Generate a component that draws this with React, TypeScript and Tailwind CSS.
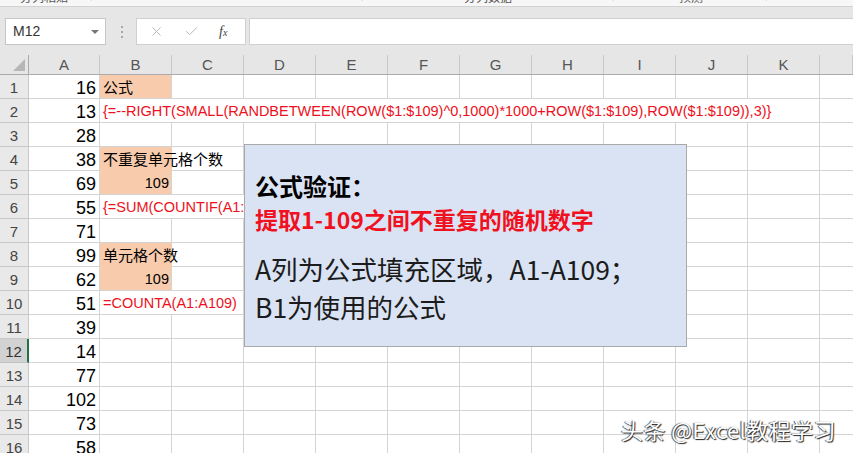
import React from "react";
import { X, Check } from "lucide-react";

/* ── sheet data ───────────────────────────────────────────── */

const COLS = ["A", "B", "C", "D", "E", "F", "G", "H", "I", "J", "K", ""];
const A_VALUES = [16, 13, 28, 38, 69, 55, 71, 99, 62, 51, 39, 14, 77, 102, 73, 58];

const SPAN_W: Record<number, string> = {
  1: "w-[72px]",
  2: "w-[144px]",
  3: "w-[216px]",
  10: "w-[720px]",
};

const LINE = "border-[#d4d4d4]";
const RED = "text-[#ee1020]";

type CellSpec = {
  span: number;
  text?: string;
  orange?: boolean;
  noRight?: boolean;
  orangeBottom?: boolean;
  align?: "left" | "right";
  red?: boolean;
  cjk?: boolean;
};

function rowCells(r: number): CellSpec[] {
  const rest = (from: number): CellSpec[] =>
    Array.from({ length: 10 - from }, () => ({ span: 1 }));
  switch (r) {
    case 1:
      return [{ span: 1, text: "公式", orange: true, cjk: true }, ...rest(1)];
    case 2:
      return [
        {
          span: 10,
          text: "{=--RIGHT(SMALL(RANDBETWEEN(ROW($1:$109)^0,1000)*1000+ROW($1:$109),ROW($1:$109)),3)}",
          red: true,
        },
      ];
    case 4:
      return [
        { span: 1, text: "不重复单元格个数", orange: true, noRight: true, orangeBottom: true, cjk: true },
        ...rest(1),
      ];
    case 5:
      return [{ span: 1, text: "109", orange: true, align: "right" }, ...rest(1)];
    case 6:
      return [{ span: 3, text: "{=SUM(COUNTIF(A1:A109,A1:A109)^-1)}", red: true }, ...rest(3)];
    case 8:
      return [
        { span: 1, text: "单元格个数", orange: true, noRight: true, orangeBottom: true, cjk: true },
        ...rest(1),
      ];
    case 9:
      return [{ span: 1, text: "109", orange: true, align: "right" }, ...rest(1)];
    case 10:
      return [{ span: 2, text: "=COUNTA(A1:A109)", red: true }, ...rest(2)];
    default:
      return rest(0);
  }
}

/* ── pieces ───────────────────────────────────────────────── */

function FormulaBar() {
  return (
    <div className="flex h-[48px] items-start bg-[#e6e6e6] pt-[11px]">
      {/* name box */}
      <div className="ml-[5px] flex h-[27px] w-[101px] items-center justify-between border border-[#c6c6c6] bg-white pl-[7px] pr-[6px]">
        <span className="text-[14px] text-[#333]">M12</span>
        <span className="h-0 w-0 border-x-[4px] border-t-[4px] border-x-transparent border-t-[#777]" />
      </div>
      {/* drag dots */}
      <div className="ml-[15px] mt-[8px] flex flex-col gap-[3px]">
        <span className="h-[2px] w-[2px] bg-[#a8a8a8]" />
        <span className="h-[2px] w-[2px] bg-[#a8a8a8]" />
        <span className="h-[2px] w-[2px] bg-[#a8a8a8]" />
      </div>
      {/* cancel / enter / fx */}
      <div className="ml-[13px] flex h-[27px] w-[110px] items-center border border-[#d0d0d0] bg-white">
        <X className="ml-[12px] h-[15px] w-[15px] text-[#b4b4b4]" strokeWidth={1.5} />
        <Check className="ml-[20px] h-[15px] w-[15px] text-[#b4b4b4]" strokeWidth={1.5} />
        <span className="ml-[20px] font-['Liberation_Serif',serif] text-[14px] italic text-[#444]">
          f<span className="text-[10px]">x</span>
        </span>
      </div>
      {/* formula input */}
      <div className="ml-[3px] h-[27px] flex-1 border-y border-l border-[#d0d0d0] bg-white" />
    </div>
  );
}

function ColumnHeader() {
  return (
    <div className="flex h-[20px] border-b border-[#ababab] bg-[#e6e6e6] text-[15px] text-[#555]">
      <div className="relative w-[29px] shrink-0 border-r border-[#ababab]">
        <svg className="absolute bottom-[3px] right-[3px]" width="12" height="12" viewBox="0 0 12 12">
          <polygon points="12,0 12,12 0,12" fill="#b7b7b7" />
        </svg>
      </div>
      {COLS.map((c, i) => (
        <div
          key={i}
          className={`flex shrink-0 items-center justify-center border-r border-[#c8c8c8] leading-none ${
            i === 0 ? "w-[71px]" : i === 11 ? "flex-1" : "w-[72px]"
          }`}
        >
          {c}
        </div>
      ))}
    </div>
  );
}

function Row({ r }: { r: number }) {
  const selected = r === 12;
  return (
    <div className="flex h-[24px]">
      <div
        className={`flex w-[29px] shrink-0 items-end justify-center border-b pb-[1px] text-[15px] leading-[18px] ${
          selected
            ? "border-r-2 border-b-[#c2c2c2] border-r-[#217346] bg-[#d2d2d2] text-[#333]"
            : "border-r border-[#c8c8c8] bg-[#e9e9e9] text-[#444]"
        }`}
      >
        {r}
      </div>
      <div
        className={`flex w-[71px] shrink-0 items-end justify-end border-r border-b ${LINE} pb-[1px] pr-[3px] text-[18px] leading-[18px] text-black`}
      >
        {A_VALUES[r - 1]}
      </div>
      {rowCells(r).map((c, i) => (
        <div
          key={i}
          className={`relative flex shrink-0 items-end pb-[2px] ${SPAN_W[c.span]} ${
            c.noRight ? "" : `border-r ${LINE}`
          } ${c.orangeBottom ? "border-b border-b-[#f8cbad]" : `border-b ${LINE}`} ${
            c.orange ? "bg-[#f8cbad]" : ""
          } ${c.align === "right" ? "justify-end pr-[2px]" : "pl-[3px]"}`}
        >
          {c.text && (
            <span
              className={`relative z-10 whitespace-nowrap ${
                c.cjk
                  ? "font-['Noto_Sans_CJK_SC',sans-serif] text-[15px] leading-[18px] text-black"
                  : c.red
                  ? `text-[14.5px] leading-[18px] ${RED}`
                  : "text-[14.5px] leading-[18px] text-black"
              }`}
            >
              {c.text}
            </span>
          )}
        </div>
      ))}
      <div className={`flex-1 border-b ${LINE}`} />
    </div>
  );
}

/* ── page ─────────────────────────────────────────────────── */

export default function App() {
  return (
    <div className="relative h-[453px] w-[853px] overflow-hidden bg-white font-['Liberation_Sans','Noto_Sans_CJK_SC',sans-serif]">
      {/* ribbon bottom edge */}
      <div className="flex h-[7px] items-end overflow-hidden border-b border-[#d2d2d2] bg-[#f7f7f7] text-[12px] leading-[12px] text-[#555]">
        <span className="ml-[20px] -translate-y-[3px] font-['Noto_Sans_CJK_SC',sans-serif]">分列粘贴</span>
        <span className="ml-[22px] -translate-y-[3px]">⌐</span>
        <span className="ml-[264px] -translate-y-[3px]">⌐</span>
        <span className="ml-[96px] -translate-y-[3px] font-['Noto_Sans_CJK_SC',sans-serif]">分列数据</span>
        <span className="ml-[100px] -translate-y-[3px]">⌐</span>
        <span className="ml-[60px] -translate-y-[3px] font-['Noto_Sans_CJK_SC',sans-serif]">预测</span>
        <span className="ml-[62px] -translate-y-[3px]">⌐</span>
      </div>

      <FormulaBar />
      <ColumnHeader />

      <div>
        {A_VALUES.map((_, i) => (
          <Row key={i} r={i + 1} />
        ))}
      </div>

      {/* text box shape over the sheet */}
      <div className="absolute left-[244px] top-[144px] z-20 h-[203px] w-[443px] border border-[#a9a9a9] bg-[#dae3f3] pl-[10px] pt-[26px] font-['Noto_Sans_CJK_SC',sans-serif]">
        <p className="text-[24px] font-bold leading-[30px] text-black">公式验证：</p>
        <p className="mt-[3px] text-[23px] font-bold leading-[30px] text-[#f0101e]">
          提取1-109之间不重复的随机数字
        </p>
        <p className="mt-[16px] text-[26.5px] font-normal leading-[38px] text-[#1c1c1c]">
          A列为公式填充区域，A1-A109；
          <br />
          B1为使用的公式
        </p>
      </div>

      {/* watermark */}
      <div className="absolute left-[621px] top-[417px] z-30 font-['Noto_Sans_CJK_SC',sans-serif] text-[22px] tracking-[0.4px] leading-[24px] text-white [text-shadow:1px_1px_1px_#222,-1px_0_1px_#444]">
        头条 @Excel教程学习
      </div>
    </div>
  );
}
